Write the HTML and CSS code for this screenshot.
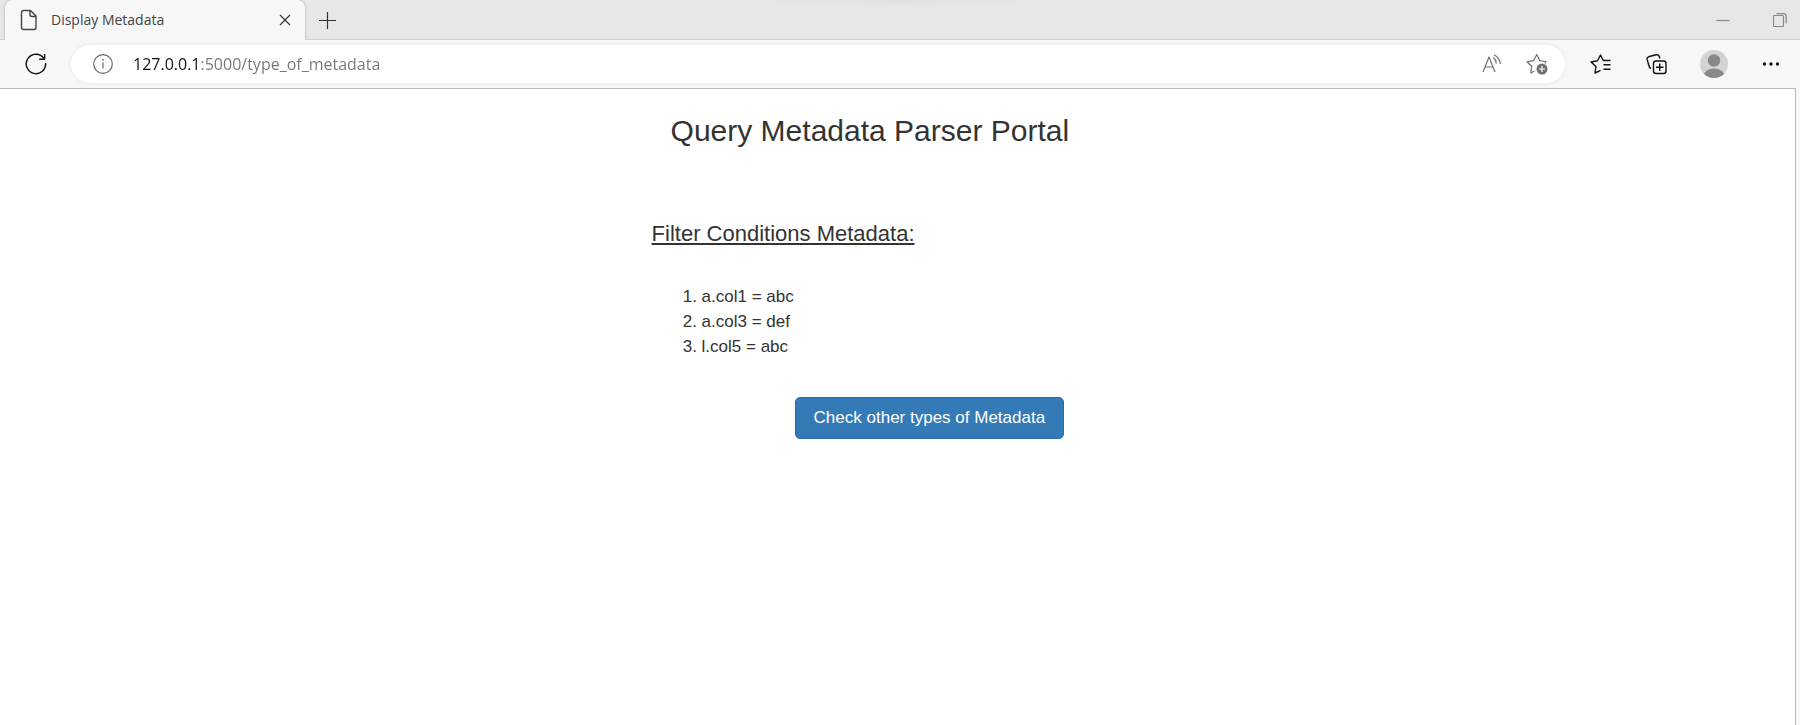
FILE: index.html
```html
<!DOCTYPE html>
<html lang="en">
<head>
<meta charset="utf-8">
<title>Display Metadata</title>
<link rel="stylesheet" href="styles.css">
</head>
<body>
<header class="browser">
  <div class="tabstrip">
    <div class="tab">
      <svg class="tab-icon" width="18" height="22" viewBox="0 0 18 22" aria-hidden="true"><path d="M3.500 1.500H10.500L16 7V18.500Q16 20.500 14 20.500H3.500Q1.500 20.500 1.500 18.500V3.500Q1.500 1.500 3.500 1.500ZM10 1.500V5.500Q10 7.500 12 7.500H16"/></svg>
      <span class="tab-title">Display Metadata</span>
      <button class="icon-button small" aria-label="Close tab"><svg width="12" height="12" viewBox="0 0 12 12"><path d="M1 1L11 11M11 1L1 11"/></svg></button>
    </div>
    <button class="icon-button new-tab" aria-label="New tab"><svg width="17" height="17" viewBox="0 0 17 17"><path d="M8.500 0V17M0 8.500H17"/></svg></button>
    <div class="window-controls">
      <button class="icon-button" aria-label="Minimize"><svg width="14" height="14" viewBox="0 0 14 14"><path d="M0.500 7.500H13.500"/></svg></button>
      <button class="icon-button" aria-label="Restore"><svg width="14" height="14" viewBox="0 0 14 14"><path d="M1.500 2.500H9.500Q10.500 2.500 10.500 3.500V12.500Q10.500 13.500 9.500 13.500H1.500Q0.500 13.500 0.500 12.500V3.500Q0.500 2.500 1.500 2.500ZM3.500 0.600H10.500Q13.200 0.600 13.200 3.500V10.500"/></svg></button>
    </div>
  </div>
  <div class="toolbar">
    <button class="icon-button" aria-label="Refresh"><svg width="22" height="22" viewBox="0 0 22 22"><path class="stroke-bold" d="M20.600 10A9.700 9.700 0 1 1 18.600 5M19.600 1V6.200H14.200"/></svg></button>
    <div class="address">
      <svg class="info" width="20" height="20" viewBox="0 0 20 20" aria-hidden="true"><circle cx="10" cy="10" r="9.300"/><path d="M10 8.500V14.500"/><circle class="solid" cx="10" cy="5.800" r="0.900"/></svg>
      <input class="url" type="text" aria-label="Address" value="127.0.0.1:5000/type_of_metadata">
      <button class="icon-button muted" aria-label="Read aloud"><svg width="20" height="20" viewBox="0 0 20 20"><path d="M1 18L7 3L13 18M3 13H11M11.500 3.500Q14 5.500 14.300 9.500M12 0.800Q17.500 3.500 18.500 10"/></svg></button>
      <button class="icon-button muted" aria-label="Add to favorites"><svg width="22" height="22" viewBox="0 0 22 22"><path d="M8.500 18L4.800 20L5.700 13.200L1 8.800L7.500 7.700L10.800 1.500L13.800 7.700L20 8.500L19 10.500"/><circle class="solid" cx="16" cy="16" r="5.500"/><path class="plus" d="M16 13V19M13 16H19"/></svg></button>
    </div>
    <div class="actions">
      <button class="icon-button" aria-label="Favorites"><svg width="22" height="22" viewBox="0 0 22 22"><path class="stroke-bold" d="M11.500 17.300L6 20L7 13.500L2 9L8.500 7.800L11.500 2L14.300 7.500H21.500M14.500 11.800H21.500M14.500 16.300H21.500"/></svg></button>
      <button class="icon-button" aria-label="Collections"><svg width="22" height="22" viewBox="0 0 22 22"><rect class="stroke-bold" x="7.500" y="8" width="12.500" height="12.500" rx="2.500"/><path class="stroke-bold" d="M13.750 10.500V18M10 14.250H17.500M5 15.500Q3.500 15 3 13L1.200 6.500Q0.700 4.500 2.500 3.800L10 1.800Q12.500 1.300 13.300 3.500L13.800 5.500"/></svg></button>
      <button class="icon-button" aria-label="Profile"><svg width="28" height="28" viewBox="0 0 28 28"><clipPath id="disc"><circle cx="14" cy="14" r="14"/></clipPath><g clip-path="url(#disc)"><path class="avatar-back" d="M0 0H28V28H0Z"/><circle class="avatar-person" cx="14" cy="10.500" r="6.200"/><ellipse class="avatar-person" cx="14" cy="26" rx="10.500" ry="7.500"/></g></svg></button>
      <button class="icon-button" aria-label="Settings and more"><svg width="18" height="6" viewBox="0 0 18 6"><circle class="solid" cx="2.500" cy="3" r="1.700"/><circle class="solid" cx="9" cy="3" r="1.700"/><circle class="solid" cx="15.500" cy="3" r="1.700"/></svg></button>
    </div>
  </div>
</header>
<main class="viewport">
  <div class="content">
    <h1 class="page-title">Query Metadata Parser Portal</h1>
    <h2 class="section-title">Filter Conditions Metadata:</h2>
    <ol class="conditions">
      <li>a.col1 = abc</li>
      <li>a.col3 = def</li>
      <li>l.col5 = abc</li>
    </ol>
    <button class="primary">Check other types of Metadata</button>
  </div>
</main>
</body>
</html>
```
FILE: styles.css
```css
* {
  box-sizing: border-box;
}

body {
  margin: 0;
  min-height: 100vh;
  display: flex;
  flex-direction: column;
  background: #f7f7f7;
  color: #333;
  font-family: "Liberation Sans", Arial, sans-serif;
}

svg {
  display: block;
  flex: none;
  fill: none;
  stroke: currentColor;
  stroke-width: 1.2;
  stroke-linejoin: round;
}

.solid {
  fill: currentColor;
  stroke: none;
}

.stroke-bold {
  stroke-width: 1.4;
}

.plus {
  stroke: #fff;
}

.tab-icon {
  stroke-width: 1.4;
}

.browser {
  font-family: "Open Sans", "Noto Sans", sans-serif;
}

.tabstrip {
  display: flex;
  height: 40px;
  padding: 0 6px 0 5px;
  background: radial-gradient(ellipse 150px 6px at 50% 0, #dfdfdf, transparent) #e7e7e7;
  box-shadow: inset 0 -1px #d2d2d2;
}

.tab {
  display: flex;
  align-items: center;
  width: 300px;
  padding: 0 10px 0 15px;
  background: #f7f7f7;
  border-radius: 8px 8px 0 0;
  box-shadow: 0 0 3px #aaa;
  clip-path: inset(0 -4px 0 -4px);
  color: #444;
}

.tab-title {
  flex: 1;
  margin-left: 13px;
  font-size: 14px;
  line-height: 20px;
}

.icon-button {
  display: flex;
  flex: none;
  align-items: center;
  justify-content: center;
  width: 28px;
  height: 28px;
  padding: 0;
  border: 0;
  background: none;
  color: #111;
}

.small {
  width: 20px;
  color: #333;
}

.new-tab {
  align-self: center;
  margin-left: 8px;
  color: #333;
}

.window-controls {
  display: flex;
  align-items: center;
  gap: 29px;
  margin-left: auto;
}

.window-controls .icon-button {
  color: #888;
}

.toolbar {
  display: flex;
  align-items: center;
  gap: 21px;
  height: 48px;
  padding: 0 15px 0 22px;
}

.address {
  display: flex;
  flex: 1;
  align-items: center;
  height: 38px;
  padding: 0 14px 0 22px;
  border-radius: 19px;
  background: #fff;
  box-shadow: 0 0 4px #e6e6e6;
}

.info {
  color: #666;
}

.url {
  flex: 1;
  min-width: 0;
  margin-left: 20px;
  padding: 0;
  border: 0;
  outline: 0;
  font: 16px/24px "Open Sans", "Noto Sans", sans-serif;
  color: #767676;
  background: linear-gradient(90deg, #111 68px, #767676 68px);
  -webkit-background-clip: text;
  background-clip: text;
  -webkit-text-fill-color: transparent;
}

.muted {
  margin-left: 17px;
  color: #707070;
}

.actions {
  display: flex;
  align-items: center;
  gap: 29px;
}

.avatar-back {
  fill: #d5d3d1;
  stroke: none;
}

.avatar-person {
  fill: #8b8885;
  stroke: none;
}

.viewport {
  flex: 1;
  margin-right: 4px;
  border: solid #b8b8b8;
  border-width: 1px 1px 0 0;
  background: #fff;
}

.content {
  padding: 25px 0 0 36.2vw;
}

.page-title {
  margin: 0 0 74px 19px;
  font-size: 30px;
  line-height: 33px;
  font-weight: 400;
}

.section-title {
  margin: 0 0 38px;
  font-size: 22px;
  line-height: 25px;
  font-weight: 400;
  text-decoration: underline;
}

.conditions {
  margin: 0 0 38px;
  padding-left: 50px;
  font-size: 17px;
  line-height: 25px;
}

.primary {
  margin-left: 143px;
  padding: 8px 18px;
  border: 1px solid #2e6da4;
  border-radius: 5px;
  background: #337ab7;
  color: #fff;
  font: 17px/24px "Liberation Sans", Arial, sans-serif;
}
```
